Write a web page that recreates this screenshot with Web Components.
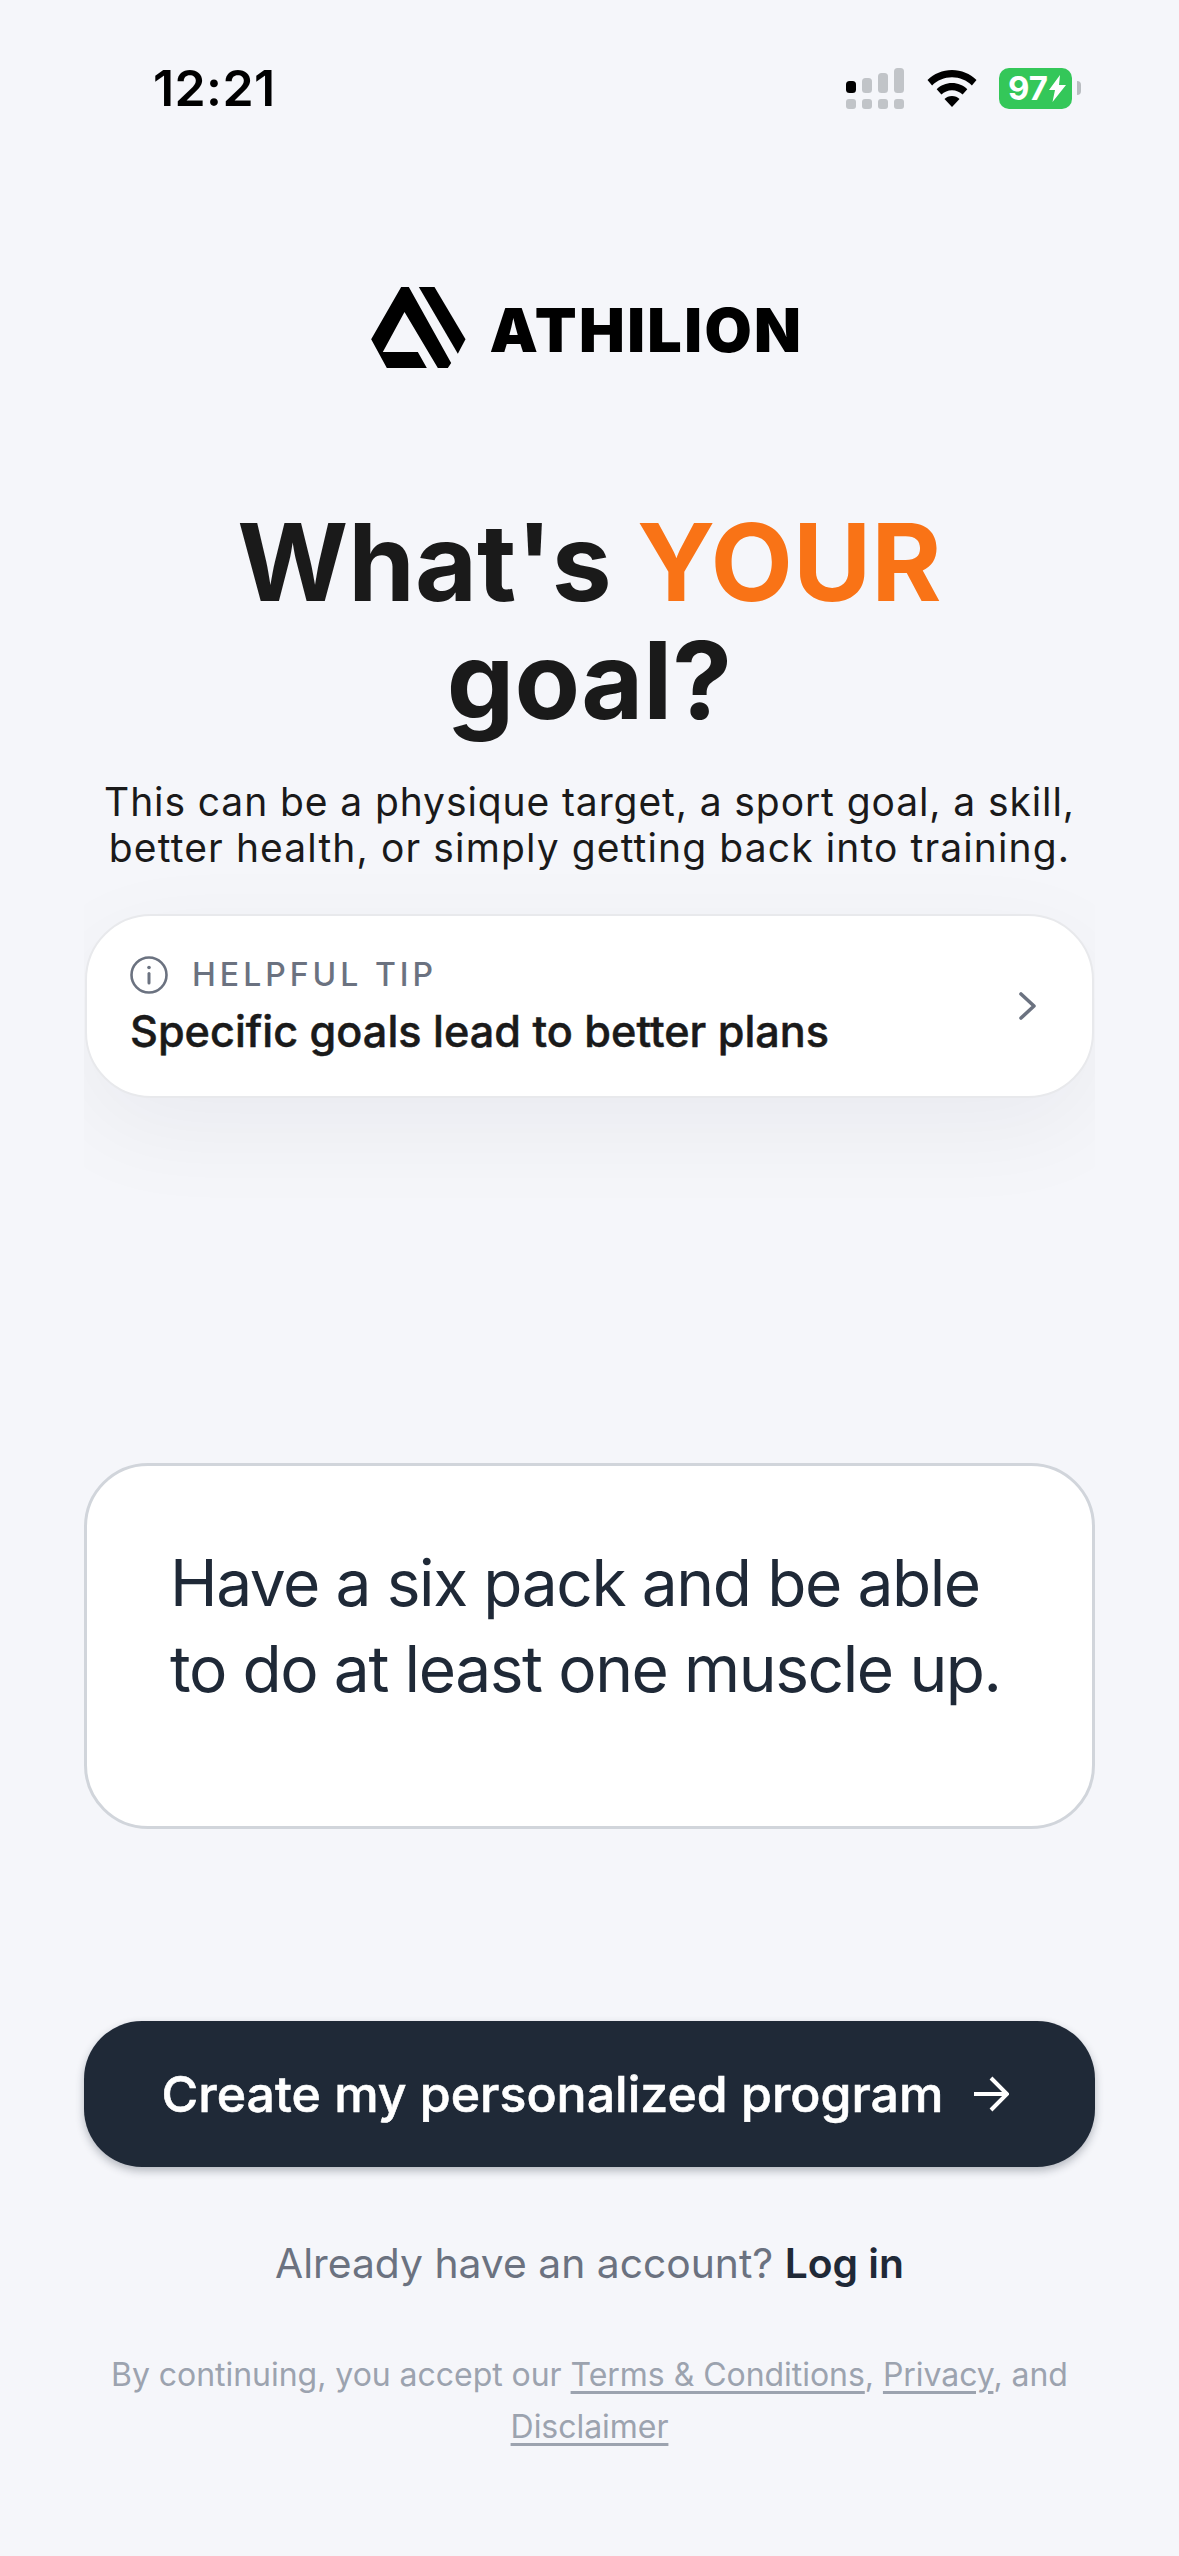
<!DOCTYPE html>
<html lang="en">
<head>
<meta charset="utf-8">
<title>Athilion</title>
<style>
  html, body { margin: 0; background: #f5f6fa; }
  body { font-family: Inter, "Liberation Sans", sans-serif; }
</style>
</head>
<body>
<goal-screen>
  <status-bar time="12:21" battery="97"></status-bar>
  <brand-logo>ATHILION</brand-logo>
  <goal-heading>
    This can be a physique target, a sport goal, a skill,<br><span style="letter-spacing: 1.12px">better health, or simply getting back into training.</span>
  </goal-heading>
  <tip-card label="HELPFUL TIP">Specific goals lead to better plans</tip-card>
  <goal-input>Have a six pack and be able to do at least one muscle up.</goal-input>
  <cta-button>Create my personalized program</cta-button>
  <login-prompt></login-prompt>
  <legal-note></legal-note>
</goal-screen>

<script>
  class GoalScreen extends HTMLElement {
    constructor() {
      super();
      this.attachShadow({ mode: 'open' }).innerHTML = `
      <style>
        :host {
          display: flex;
          flex-direction: column;
          width: 1179px;
          height: 2556px;
          overflow: hidden;
          background: #f5f6fa;
        }
      </style>
      <slot></slot>`;
    }
  }

  class StatusBar extends HTMLElement {
    constructor() {
      super();
      this.attachShadow({ mode: 'open' }).innerHTML = `
      <style>
        :host {
          display: flex;
          align-items: center;
          justify-content: space-between;
          height: 60px;
          padding: 58px 98px 0 153px;
          color: #000;
        }
        .time { font-size: 50px; font-weight: 600; line-height: 60px; letter-spacing: 0.4px; }
        .icons { display: flex; align-items: center; }
        svg { display: block; }
        .wifi { margin-left: 23px; }
        .battery { margin-left: 22px; display: flex; align-items: center; }
        .cell {
          width: 73px; height: 41px; border-radius: 10px; background: #34c759;
          color: #fff; font-size: 33px; font-weight: 700; line-height: 41px;
          display: flex; align-items: center; padding-left: 9px; box-sizing: border-box;
        }
        .cap { width: 4px; height: 14px; margin-left: 5px; border-radius: 0 4px 4px 0; background: #b9bdc1; }
        .cell svg { margin-left: 1px; }
      </style>
      <span class="time">${this.getAttribute('time')}</span>
      <div class="icons">
        <svg width="58" height="41" viewBox="0 0 58 41">
          <rect x="0" y="13" width="10" height="12" rx="3.5" fill="#000"/>
          <rect x="16" y="10" width="10" height="15" rx="3.5" fill="#c1c4c8"/>
          <rect x="32" y="5" width="10" height="20" rx="3.5" fill="#c1c4c8"/>
          <rect x="48" y="0" width="10" height="25" rx="3.5" fill="#c1c4c8"/>
          <rect x="0" y="31" width="10" height="10" rx="3" fill="#c1c4c8"/>
          <rect x="16" y="31" width="10" height="10" rx="3" fill="#c1c4c8"/>
          <rect x="32" y="31" width="10" height="10" rx="3" fill="#c1c4c8"/>
          <rect x="48" y="31" width="10" height="10" rx="3" fill="#c1c4c8"/>
        </svg>
        <svg class="wifi" width="50" height="37" viewBox="0 0 50 37">
          <path d="M25 0C15.5 0 7 3.7 0.5 10l4.6 5.4C10.4 10.2 17.3 7.2 25 7.2s14.6 3 19.9 8.2L49.500 10C43 3.700 34.500 0 25 0z" fill="#000"/>
          <path d="M25 13c-6 0-11.300 2.300-15.300 6.200l4.700 5.300c2.800-2.700 6.500-4.300 10.600-4.300s7.800 1.600 10.600 4.300l4.700-5.300C36.300 15.300 31 13 25 13z" fill="#000"/>
          <path d="M25 26c-3 0-5.600 1.100-7.500 3L25 37l7.500-8c-1.900-1.900-4.500-3-7.500-3z" fill="#000"/>
        </svg>
        <div class="battery">
          <div class="cell">${this.getAttribute('battery')}<svg width="17" height="27" viewBox="0 0 17 27"><path d="M11 0L0 15h6L3.500 27L17 10h-7z" fill="#fff"/></svg></div>
          <div class="cap"></div>
        </div>
      </div>`;
    }
  }

  class BrandLogo extends HTMLElement {
    constructor() {
      super();
      this.attachShadow({ mode: 'open' }).innerHTML = `
      <style>
        :host {
          display: flex;
          align-items: center;
          justify-content: center;
          gap: 24px;
          margin-top: 168px;
          padding-right: 5px;
          height: 84px;
          color: #000;
          font-size: 61px;
          font-weight: 900;
          letter-spacing: 2.4px;
        }
        svg { display: block; }
        span { position: relative; top: 2px; }
      </style>
      <svg width="95" height="82" viewBox="65 55 284 246">
        <path d="M155 55H178L305 283L295 298H265L165 130L100 250H205L232 298H112L65 212Z" fill="#000"/>
        <path d="M208 55H255L348 212L325 255Z" fill="#000"/>
      </svg>
      <span><slot></slot></span>`;
    }
  }

  class GoalHeading extends HTMLElement {
    constructor() {
      super();
      this.attachShadow({ mode: 'open' }).innerHTML = `
      <style>
        :host { display: block; text-align: center; margin-top: 133px; }
        h1 {
          margin: 0;
          font-size: 107px;
          line-height: 118px;
          font-weight: 700;
          color: #1a1a1a;
        }
        h1 span { color: #f97316; }
        p {
          margin: 40px 0 0;
          font-size: 39px;
          line-height: 46px;
          letter-spacing: 0.9px;
          color: #1a1a1a;
        }
      </style>
      <h1>What's <span>YOUR</span><br>goal?</h1>
      <p><slot></slot></p>`;
    }
  }

  class TipCard extends HTMLElement {
    constructor() {
      super();
      this.attachShadow({ mode: 'open' }).innerHTML = `
      <style>
        :host {
          display: block;
          margin: -17px 84px 0;
          padding: 60px 1px 130px;
          overflow: hidden;
        }
        .card {
          display: flex;
          align-items: center;
          justify-content: space-between;
          box-sizing: border-box;
          height: 184px;
          padding: 0 54px 0 43px;
          background: #fff;
          border: 2px solid #e8e9ec;
          border-radius: 66px;
          box-shadow: 0 30px 100px rgba(17, 24, 39, 0.05);
        }
        .label {
          display: flex;
          align-items: center;
          gap: 24px;
          font-size: 32px;
          line-height: 40px;
          font-weight: 500;
          letter-spacing: 4px;
          color: #6b7280;
        }
        .label svg { display: block; }
        .title {
          margin-top: 10px;
          font-size: 43.200px;
          line-height: 52px;
          font-weight: 500;
          -webkit-text-stroke: 0.5px #1a1a1a;
          color: #1a1a1a;
        }
        .chevron { display: block; }
      </style>
      <div class="card">
        <div>
          <div class="label">
            <svg width="38" height="38" viewBox="0 0 38 38" fill="none" stroke="#6b7280">
              <circle cx="19" cy="19" r="17.500" stroke-width="2.600"/>
              <path d="M19 17.500V27" stroke-width="3" stroke-linecap="round"/>
              <circle cx="19" cy="11.500" r="1.800" fill="#6b7280" stroke="none"/>
            </svg>
            <span>${this.getAttribute('label')}</span>
          </div>
          <div class="title"><slot></slot></div>
        </div>
        <svg class="chevron" width="20" height="30" viewBox="0 0 20 30" fill="none">
          <path d="M3 3L16 15L3 27" stroke="#6b7280" stroke-width="3.600" stroke-linecap="round" stroke-linejoin="round"/>
        </svg>
      </div>`;
    }
  }

  class GoalInput extends HTMLElement {
    constructor() {
      super();
      this.attachShadow({ mode: 'open' }).innerHTML = `
      <style>
        :host {
          display: block;
          box-sizing: border-box;
          margin: 235px 84px 0;
          height: 366px;
          padding: 74px 50px 0 83px;
          background: #fff;
          border: 3px solid #d1d5db;
          border-radius: 64px;
          font-size: 64px;
          letter-spacing: -1.4px;
          line-height: 86px;
          color: #1f2937;
        }
      </style>
      <slot></slot>`;
    }
  }

  class CtaButton extends HTMLElement {
    constructor() {
      super();
      this.attachShadow({ mode: 'open' }).innerHTML = `
      <style>
        :host {
          display: flex;
          align-items: center;
          justify-content: center;
          gap: 30px;
          margin: 192px 84px 0;
          padding-right: 8px;
          height: 146px;
          border-radius: 58px;
          background: #1f2937;
          color: #fff;
          font-size: 50px;
          font-weight: 500;
          -webkit-text-stroke: 0.6px #fff;
          box-shadow: 0 4px 8px rgba(31, 41, 55, 0.3);
        }
        svg { display: block; }
      </style>
      <span><slot></slot></span>
      <svg width="36" height="36" viewBox="0 0 36 36" fill="none">
        <path d="M1 18H34M18 2L34 18L18 34" stroke="#fff" stroke-width="4"/>
      </svg>`;
    }
  }

  class LoginPrompt extends HTMLElement {
    constructor() {
      super();
      this.attachShadow({ mode: 'open' }).innerHTML = `
      <style>
        :host {
          display: block;
          margin-top: 70px;
          text-align: center;
          font-size: 40.800px;
          line-height: 52px;
          color: #6b7280;
        }
        b { font-weight: 600; color: #1f2937; }
      </style>
      Already have an account? <b>Log in</b>`;
    }
  }

  class LegalNote extends HTMLElement {
    constructor() {
      super();
      this.attachShadow({ mode: 'open' }).innerHTML = `
      <style>
        :host {
          display: block;
          margin-top: 60px;
          text-align: center;
          font-size: 32px;
          letter-spacing: -0.04px;
          line-height: 52px;
          color: #9ca3af;
        }
        a { color: inherit; text-decoration: underline; text-underline-offset: 5px; }
      </style>
      By continuing, you accept our <a>Terms &amp; Conditions</a>, <a>Privacy</a>, and<br><a>Disclaimer</a>`;
    }
  }

  customElements.define('goal-screen', GoalScreen);
  customElements.define('status-bar', StatusBar);
  customElements.define('brand-logo', BrandLogo);
  customElements.define('goal-heading', GoalHeading);
  customElements.define('tip-card', TipCard);
  customElements.define('goal-input', GoalInput);
  customElements.define('cta-button', CtaButton);
  customElements.define('login-prompt', LoginPrompt);
  customElements.define('legal-note', LegalNote);
</script>
</body>
</html>
